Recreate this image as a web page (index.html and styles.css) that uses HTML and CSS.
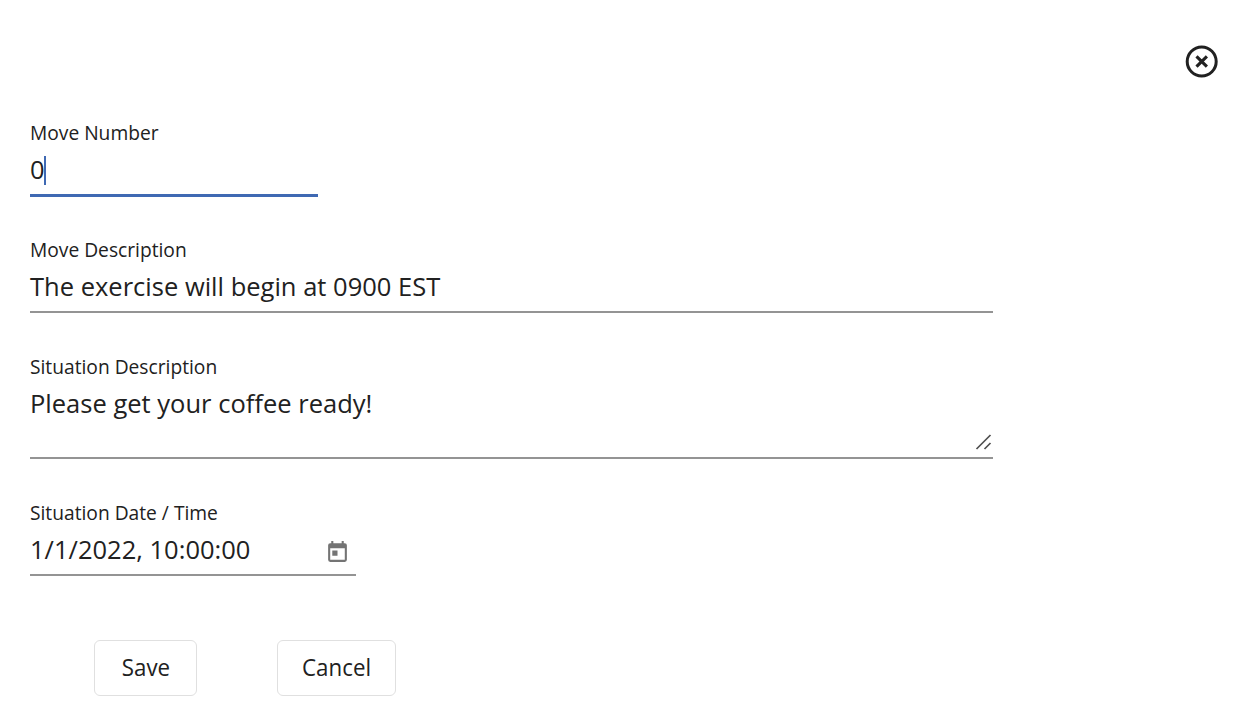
FILE: index.html
```html
<!DOCTYPE html>
<html lang="en">
<head>
<meta charset="utf-8">
<title>Edit Move</title>
<link rel="stylesheet" href="styles.css">
</head>
<body>
<main class="dialog">
  <header class="dialog-header">
    <svg class="close" viewBox="0 0 34 34" role="img" aria-label="Close">
      <circle cx="16.7" cy="17.5" r="14.5" fill="none" stroke="currentColor" stroke-width="3"/>
      <path d="M11.5 12.3 21.900 22.700M21.900 12.300 11.500 22.700" stroke="currentColor" stroke-width="3.1"/>
    </svg>
  </header>
  <section class="field number focused">
    <div class="label"><span>Move Number</span></div>
    <div class="value"><span>0</span><i class="caret"></i></div>
  </section>
  <section class="field">
    <div class="label"><span>Move Description</span></div>
    <div class="value"><span>The exercise will begin at 0900 EST</span></div>
  </section>
  <section class="field area">
    <div class="label"><span>Situation Description</span></div>
    <div class="value"><span>Please get your coffee ready!</span></div>
    <svg class="grip" viewBox="0 0 18 18"><path d="M1.500 16 15.500 2M9.500 16 15.500 10" fill="none" stroke="#505050" stroke-width="1.7"/></svg>
  </section>
  <section class="field date">
    <div class="label"><span>Situation Date / Time</span></div>
    <div class="value"><span>1/1/2022, 10:00:00</span>
      <svg class="calendar" viewBox="0 0 24 24"><path fill="currentColor" fill-rule="evenodd" d="M19 3H18V1H16V3H8V1H6V3H5Q3 3 3 5V19Q3 21 5 21H19Q21 21 21 19V5Q21 3 19 3ZM19 19H5V8H19ZM7 10H12V15H7Z"/></svg>
    </div>
  </section>
  <div class="actions">
    <button class="button save"><span>Save</span></button>
    <button class="button cancel"><span>Cancel</span></button>
  </div>
</main>
</body>
</html>
```
FILE: styles.css
```css
* { box-sizing: border-box; }
body { margin: 0; background: #fff; color: #212121; font-family: "Open Sans", sans-serif; }
.dialog { height: 706px; padding: 44px 35px 0 30px; overflow: hidden; }
.dialog-header { display: flex; justify-content: flex-end; height: 76px; }
.close { width: 34px; height: 34px; }
.field { position: relative; width: 963px; height: 76px; margin-bottom: 41px; border-bottom: 2px solid #949494; }
.number { width: 288px; }
.focused { height: 77px; margin-bottom: 40px; border-bottom: 3px solid #3f69b3; }
.label { height: 26px; line-height: 26px; font-size: 19.4px; white-space: nowrap; }
.label span { display: inline-block; transform: scaleX(.99); transform-origin: left; }
.value { display: flex; align-items: center; height: 48px; line-height: 46px; font-size: 26.1px; white-space: nowrap; }
.value span { margin-left: .4px; transform: translateY(-1px) scaleX(.978); transform-origin: left; }
.caret { width: 2px; height: 29px; margin-left: -1.500px; background: #3f69b3; }
.area { height: 105px; }
.grip { position: absolute; right: 0; bottom: 6px; width: 18px; height: 18px; }
.date { width: 326px; height: 76px; margin-bottom: 64px; }
.calendar { width: 25px; height: 25px; margin-left: auto; margin-right: 6px; margin-top: 4px; color: #747474; }
.actions { display: flex; gap: 80px; padding-left: 64px; }
.button { height: 56px; padding: 0 0 2px; border: 1px solid #e0e0e0; border-radius: 6px; background: #fff; color: #212121; font: 23px "Open Sans", sans-serif; }
.button span { display: inline-block; transform: scaleX(.97); }
.save { width: 103px; }
.cancel { width: 119px; }
```
